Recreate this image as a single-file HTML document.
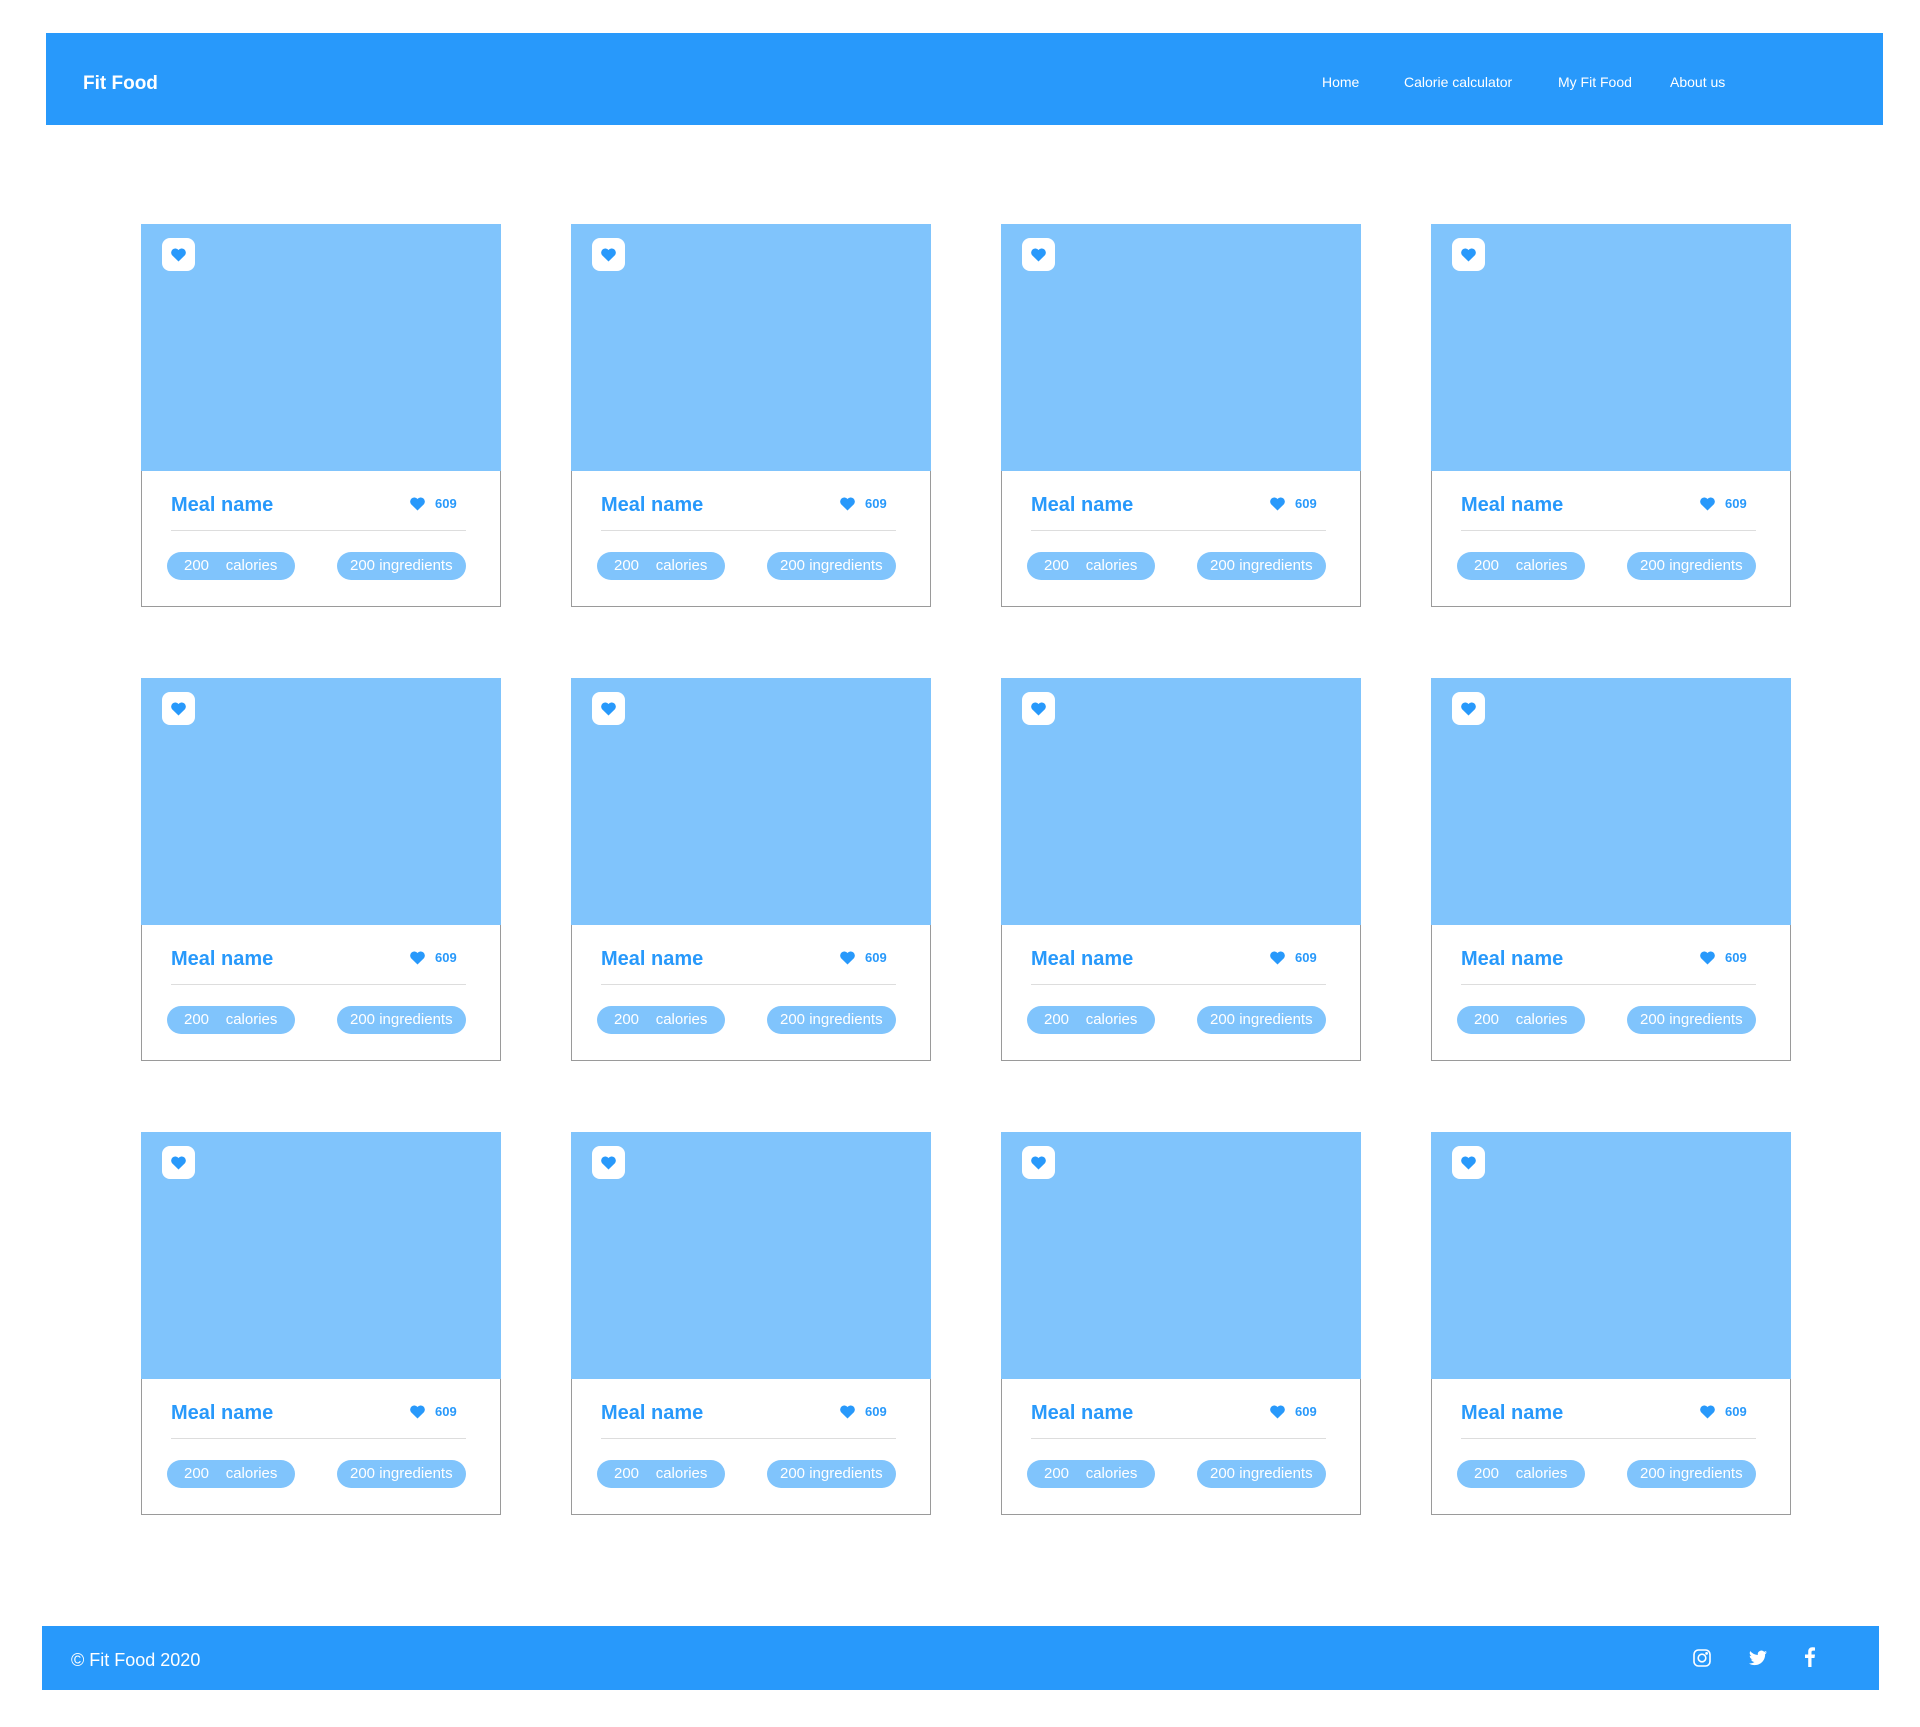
<!DOCTYPE html>
<html><head><meta charset="utf-8">
<style>
*{margin:0;padding:0;box-sizing:border-box}
body{width:1920px;height:1727px;background:#fff;position:relative;font-family:"Liberation Sans",Arial,sans-serif;overflow:hidden}
.hdr{position:absolute;left:46px;top:33px;width:1837px;height:92px;background:#2899fb}
.logo{position:absolute;left:37px;top:40px;color:#fff;font-weight:bold;font-size:19px;line-height:22px}
.nav{position:absolute;top:41px;color:#fff;font-size:14px;line-height:16px}
.card{position:absolute;width:360px;height:383px;border:1.5px solid #9a9a9a;background:#fff}
.img{position:absolute;left:-1.5px;top:-1.5px;width:360px;height:247px;background:#80c4fc}
.badge{position:absolute;left:21px;top:14px;width:33px;height:33px;background:#fff;border-radius:8px}
.badge svg{position:absolute;left:8px;top:9px}
.name{position:absolute;left:29px;top:268px;color:#2899fb;font-weight:bold;font-size:20px;line-height:24px}
.likes{position:absolute;left:267px;top:271px;height:16px}
.likes svg{position:absolute;left:0;top:0}
.likes span{position:absolute;left:26px;top:0;color:#2899fb;font-weight:bold;font-size:13px;line-height:16px}
.div{position:absolute;left:29px;top:305px;width:295px;height:1px;background:#ddd}
.pill{position:absolute;top:327px;height:28px;border-radius:14px;background:#80c4fc;color:#fff;font-size:15px;line-height:28px;white-space:pre}
.p1{left:25px;width:128px;padding-left:17px}
.p2{left:195px;width:129px;padding-left:13px}
.ftr{position:absolute;left:42px;top:1626px;width:1837px;height:64px;background:#2899fb}
.copy{position:absolute;left:29px;top:24px;color:#fff;font-size:18px;line-height:20px}
</style></head><body>
<div class="hdr">
<div class="logo">Fit Food</div>
<div class="nav" style="left:1276px">Home</div>
<div class="nav" style="left:1358px">Calorie calculator</div>
<div class="nav" style="left:1512px">My Fit Food</div>
<div class="nav" style="left:1624px">About us</div>
</div>

<div id="grid"></div>

<div class="ftr">
<div class="copy">© Fit Food 2020</div>
<svg style="position:absolute;left:1651px;top:23px" width="18" height="18" viewBox="0 0 18 18" fill="none" stroke="#fff" stroke-width="1.6"><rect x="1" y="1" width="16" height="16" rx="4.5"/><circle cx="9" cy="9" r="3.8"/><circle cx="13.6" cy="4.4" r=".6" fill="#fff"/></svg>
<svg style="position:absolute;left:1707px;top:24px" width="18" height="16" viewBox="0 0 24 20"><path fill="#fff" d="M24 2.4a9.8 9.8 0 0 1-2.8.8A4.9 4.9 0 0 0 23.3.5a9.9 9.9 0 0 1-3.1 1.2A4.9 4.9 0 0 0 11.8 6 14 14 0 0 1 1.7.9a4.9 4.9 0 0 0 1.5 6.6A4.9 4.9 0 0 1 1 6.9v.1a4.9 4.9 0 0 0 3.9 4.8 4.9 4.9 0 0 1-2.2.1 4.9 4.9 0 0 0 4.6 3.4A9.9 9.9 0 0 1 0 17.3 14 14 0 0 0 7.5 19.5c9.1 0 14-7.5 14-14v-.6A10 10 0 0 0 24 2.4z"/></svg>
<svg style="position:absolute;left:1763px;top:21px" width="10" height="20" viewBox="0 0 10 20"><path fill="#fff" d="M6.5 20V11h3l.5-3.5H6.5V5.3c0-1 .3-1.7 1.8-1.7H10V.5C9.6.4 8.6.3 7.4.3 4.9.3 3.2 1.8 3.2 4.6v2.9H0V11h3.2v9z"/></svg>
</div>

<script>
var cols=[141,571,1001,1431],rows=[224,678,1132],h='';
var heart='<path d="M8 14.5 1.6 8.2A3.9 3.9 0 0 1 8 3a3.9 3.9 0 0 1 6.4 5.2z" fill="#2899fb"/>';
rows.forEach(function(y){cols.forEach(function(x){
h+='<div class="card" style="left:'+x+'px;top:'+y+'px"><div class="img"><div class="badge"><svg width="17" height="16" viewBox="0 0 16 16">'+heart+'</svg></div></div>'+
'<div class="name">Meal name</div><div class="likes"><svg width="17" height="16" viewBox="0 0 16 16">'+heart+'</svg><span>609</span></div>'+
'<div class="div"></div><div class="pill p1">200    calories</div><div class="pill p2">200 ingredients</div></div>';
});});
document.getElementById('grid').innerHTML=h;
</script>
</body></html>
